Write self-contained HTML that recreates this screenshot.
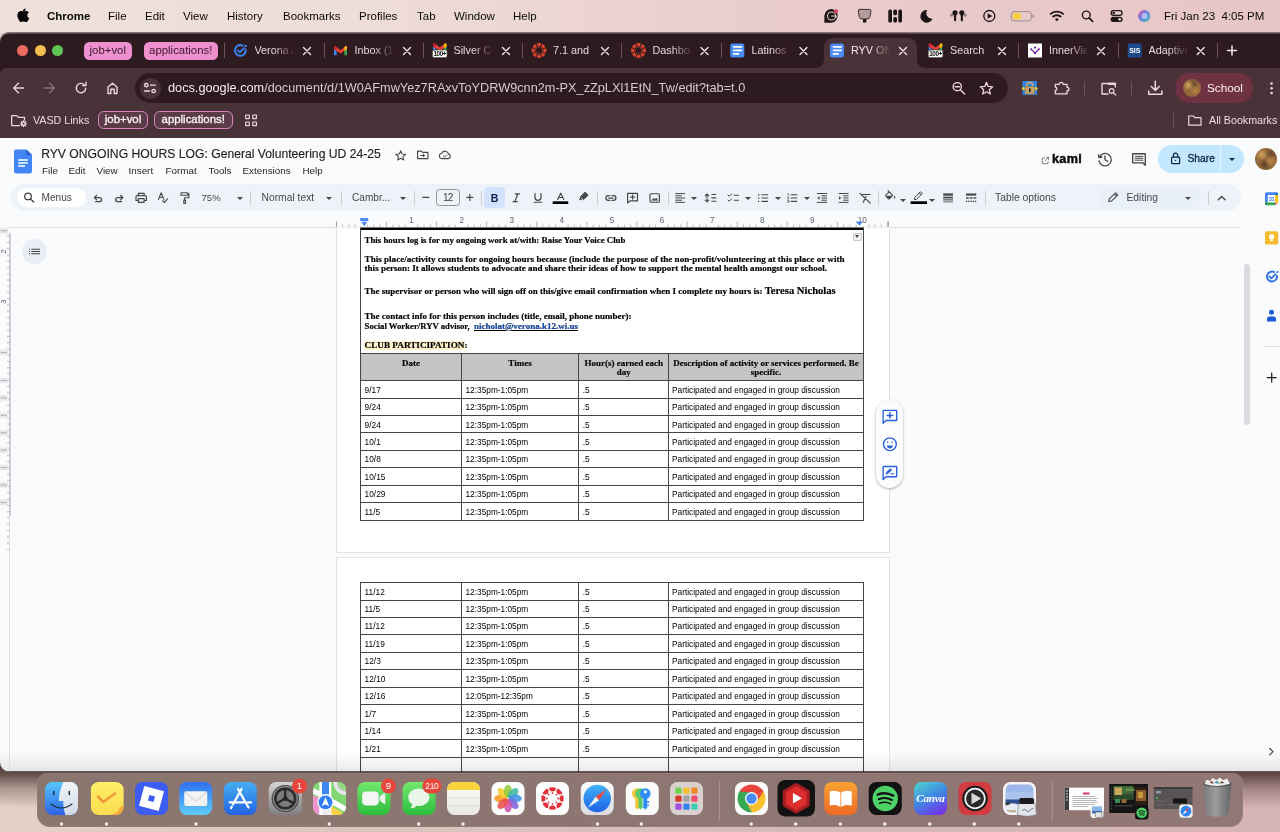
<!DOCTYPE html>
<html lang="en">
<head>
<meta charset="utf-8">
<title>RYV ONGOING HOURS LOG</title>
<style>
*{box-sizing:border-box;margin:0;padding:0}
html,body{width:1280px;height:832px;overflow:hidden}
body{position:relative;background:linear-gradient(90deg,#e4d1c9 0,#dbc6bf 25%,#d4bab7 65%,#d6b3b7 100%);font-family:"Liberation Sans",sans-serif;color:#000;-webkit-font-smoothing:antialiased}
.abs{position:absolute}
#menubar span,#tabstrip,#toolbar>div,#bmbar>div,#D{will-change:transform}
svg{position:absolute;overflow:visible}
/* ---------- mac menu bar ---------- */
#menubar{position:absolute;left:0;top:0;width:1280px;height:33px;background:linear-gradient(90deg,#efe1db 0,#eedcd7 30%,#e9cccb 62%,#e8c6c7 100%)}
#menubar span{position:absolute;top:8px;font-size:11.5px;line-height:16px;color:#0a0a0a;white-space:nowrap}
#menubar span.b{font-weight:bold}
/* ---------- chrome window ---------- */
#win{position:absolute;left:0;top:32px;width:1280px;height:740px;background:#2e1b20;border-radius:9px 0 0 10px;overflow:hidden;box-shadow:inset 0 1.4px .6px rgba(255,235,235,.42)}
#tabstrip{position:absolute;left:0;top:0;width:1280px;height:36px}
#toolbar{position:absolute;left:0;top:36px;width:1280px;height:38px;background:#4a3338;border-radius:6.5px 0 0 0}
#bmbar{position:absolute;left:0;top:74px;width:1280px;height:31.5px;background:#4a3338}
.tl{position:absolute;top:13.3px;width:11px;height:11px;border-radius:50%}
.pill{position:absolute;top:10px;height:17.5px;border-radius:5.5px;background:#ee8fce;color:#3a1a2c;font-size:11.4px;line-height:17.5px;text-align:center;white-space:nowrap}
.tab{position:absolute;top:9.8px;height:16px;font-size:10.8px;line-height:16px;color:#e8d6da;white-space:nowrap;overflow:hidden}
.tabx{position:absolute;top:9px;font-size:13px;line-height:18px;color:#f0e4e6}
.tsep{position:absolute;top:11px;width:1px;height:15px;background:#6a5258}
#omni{position:absolute;left:135px;top:5px;width:872.5px;height:29.5px;border-radius:15px;background:#2e1b20}
#url{position:absolute;left:167.5px;top:12px;font-size:12.73px;line-height:16px;color:#d9c9cd;white-space:nowrap}
#url b{font-weight:normal;color:#f6edee}
.bm{position:absolute;top:5.6px;font-size:10.7px;line-height:16px;color:#eadcdf;white-space:nowrap}
.bpill{position:absolute;top:5px;height:18.2px;border-radius:6px;border:1.4px solid #d884bd;background:#5a3c49;color:#fbeef5;font-size:11.4px;-webkit-text-stroke:.35px #fbeef5;line-height:15px;text-align:center;white-space:nowrap}
.fade{position:absolute;top:9px;width:22px;height:18px;background:linear-gradient(90deg,rgba(46,27,32,0),#2e1b20 95%)}
.fade.a{background:linear-gradient(90deg,rgba(74,51,56,0),#4a3338 95%)}
/* ---------- docs ---------- */
#docs{position:absolute;left:0;top:105.5px;width:1280px;height:636px;background:#f9fbfd;overflow:hidden}
#D{position:absolute;left:0;top:0;width:1280px;height:772px;overflow:hidden;border-radius:0 0 0 10px}
/* page */
#P{position:absolute;left:0;top:0;width:1280px;height:772px;clip-path:inset(227.5px 0 0 0)}
#title{position:absolute;left:41.2px;top:144.8px;-webkit-text-stroke:.15px #1f1f1f;font-size:12.17px;line-height:18px;color:#1f1f1f;white-space:nowrap}
.mn{position:absolute;top:163.5px;font-size:9.85px;line-height:14px;color:#1f1f1f;white-space:nowrap}
#tb{position:absolute;left:10.5px;top:183.8px;width:1230.5px;height:27.4px;border-radius:13.7px;background:#eef3fa}
.tt{position:absolute;top:190.5px;font-size:10.1px;line-height:14px;color:#444746;white-space:nowrap}
.vs{position:absolute;top:190.5px;width:1px;height:14px;background:#c8cbd0}
.car{position:absolute;top:196.5px;width:0;height:0;border-left:3.1px solid transparent;border-right:3.1px solid transparent;border-top:3.5px solid #444746}
.page{position:absolute;left:336px;width:553.5px;background:#fff;border:1px solid #e2e4e8}
.ser{font-family:"Liberation Serif",serif;font-weight:bold;-webkit-text-stroke:.18px #000;color:#000;white-space:nowrap;position:absolute;font-size:9px;line-height:10px;left:364.6px}
.hl{position:absolute;background:#454545}
.vl{position:absolute;background:#454545;width:1px}
.c{position:absolute;font-size:8.3px;line-height:10px;color:#000;white-space:nowrap}
.th{position:absolute;font-family:"Liberation Serif",serif;font-weight:bold;-webkit-text-stroke:.15px #000;font-size:9px;line-height:9.4px;color:#000;text-align:center;white-space:nowrap}

table.t{position:absolute;border-collapse:collapse;table-layout:fixed;font-size:8.25px;color:#000}
table.t td{border:1px solid #222;padding:0 0 0 4px;height:17.4px;vertical-align:middle;white-space:nowrap;line-height:10px}
table.t td.h{background:#cccccc;font-family:"Liberation Serif",serif;font-weight:bold;font-size:8.4px;text-align:center;vertical-align:top;padding:3px 2px 0 2px;white-space:normal;line-height:9.6px}
/* dock */
#dock{position:absolute;left:37px;top:773.3px;width:1206.300px;height:54px;border-radius:10px 10px 13px 13px;background:linear-gradient(90deg,#8b766f,#8e7672 60%,#917775);box-shadow:0 0 0 .6px rgba(255,255,255,.12) inset}
.di{position:absolute;top:781px;width:38px;height:38px;border-radius:9px}
.dot{position:absolute;top:825px;width:3px;height:3px;border-radius:50%;background:#f3eceb}
</style>
</head>
<body>
<!-- MENUBAR -->
<div id="menubar">
<span class="b" style="left:47px">Chrome</span>
<span style="left:108px">File</span>
<span style="left:145px">Edit</span>
<span style="left:183px">View</span>
<span style="left:227px">History</span>
<span style="left:283px">Bookmarks</span>
<span style="left:359px">Profiles</span>
<span style="left:417px">Tab</span>
<span style="left:454px">Window</span>
<span style="left:513px">Help</span>
<span style="left:1164px">Fri Jan 23&nbsp; 4:05 PM</span>
</div>
<div id="wshadow" class="abs" style="left:0;top:764px;width:1280px;height:44px;background:linear-gradient(180deg,rgba(62,40,38,.85) 0,rgba(62,40,38,.78) 22%,rgba(80,55,52,.38) 55%,rgba(90,60,58,0) 100%)"></div>
<!-- WINDOW -->
<div id="win">

<div id="tabstrip">
<div class="tl" style="left:17.1px;background:#ee6a5f"></div>
<div class="tl" style="left:34.5px;background:#f5bf4f"></div>
<div class="tl" style="left:51.9px;background:#5fc454"></div>
<div class="pill" style="left:84px;width:47.5px">job+vol</div>
<div class="pill" style="left:144px;width:73.5px">applications!</div>
<!-- tab separators -->
<div class="tsep" style="left:223.5px"></div>
<div class="tsep" style="left:323.5px"></div>
<div class="tsep" style="left:422.5px"></div>
<div class="tsep" style="left:522px"></div>
<div class="tsep" style="left:621px"></div>
<div class="tsep" style="left:720.5px"></div>
<div class="tsep" style="left:1018px"></div>
<div class="tsep" style="left:1117.5px"></div>
<div class="tsep" style="left:1216.5px"></div>
<!-- active tab -->
<div class="abs" style="left:823.5px;top:6px;width:93.5px;height:30px;background:#4a3338;border-radius:9px 9px 0 0"></div>
<svg style="left:815.5px;top:28px" width="8" height="8"><path d="M8 0 V8 H0 A8 8 0 0 0 8 0Z" fill="#4a3338"/></svg>
<svg style="left:917px;top:28px" width="8" height="8"><path d="M0 0 V8 H8 A8 8 0 0 1 0 0Z" fill="#4a3338"/></svg>
<!-- tab labels -->
<div class="tab" style="left:254.5px;width:38px">Verona Area</div>
<div class="tab" style="left:354.5px;width:38px">Inbox (1,204)</div>
<div class="tab" style="left:453.5px;width:38px">Silver Cord</div>
<div class="tab" style="left:553px;width:38px">7.1 and</div>
<div class="tab" style="left:652.5px;width:38px">Dashboard</div>
<div class="tab" style="left:751.5px;width:38px">Latinos</div>
<div class="tab" style="left:851px;width:38px;color:#f6ecee">RYV ONGOING</div>
<div class="tab" style="left:950px;width:38px">Search</div>
<div class="tab" style="left:1049px;width:38px">InnerView</div>
<div class="tab" style="left:1148.5px;width:38px">Adaptive</div>
<!-- fades -->
<div class="fade" style="left:274px"></div>
<div class="fade" style="left:374px"></div>
<div class="fade" style="left:473px"></div>
<div class="fade" style="left:672px"></div>
<div class="fade" style="left:771px"></div>
<div class="fade a" style="left:870px"></div>
<div class="fade" style="left:1069px"></div>
<div class="fade" style="left:1168px"></div>
</div>

<div id="toolbar">
<div id="omni"></div>
<div class="abs" style="left:139.5px;top:9.5px;width:21px;height:21px;border-radius:50%;background:#4a3338"></div>
<div id="url"><b>docs.google.com</b>/document/d/1W0AFmwYez7RAxvToYDRW9cnn2m-PX_zZpLXl1EtN_Tw/edit?tab=t.0</div>
<div class="abs" style="left:1175px;top:5px;width:78px;height:30px;border-radius:15px;background:#6e3242"></div>
<div class="abs" style="left:1183px;top:11px;width:18px;height:18px;border-radius:50%;background:radial-gradient(circle at 30% 35%,#d2a45c 0,rgba(210,164,92,0) 30%),radial-gradient(circle at 70% 65%,#b88444 0,rgba(184,132,68,0) 32%),radial-gradient(circle at 60% 25%,#6b4a2c 0,rgba(107,74,44,0) 30%),#94693c"></div>
<div class="abs" style="left:1206.5px;top:12px;font-size:11.75px;line-height:16px;color:#fff1f3">School</div>
</div>
<div id="bmbar">
<div class="bm" style="left:32.5px">VASD Links</div>
<div class="bpill" style="left:97.5px;width:50px">job+vol</div>
<div class="bpill" style="left:154px;width:78.5px">applications!</div>
<div class="abs" style="left:1172.5px;top:7px;width:1px;height:15px;background:#6a5258"></div>
<div class="bm" style="left:1209px">All Bookmarks</div>
</div>
<div id="docs"></div>
</div>

<svg id="chromeicons" style="left:0;top:0" width="1280" height="140" fill="none" stroke="#ecd6db" stroke-width="1.4" stroke-linecap="round" stroke-linejoin="round">
<g stroke="#f3e6e9" stroke-width="1.35"><path d="M303.5 47.5 l7 7 m0 -7 l-7 7"/><path d="M403.5 47.5 l7 7 m0 -7 l-7 7"/><path d="M502.5 47.5 l7 7 m0 -7 l-7 7"/><path d="M601.5 47.5 l7 7 m0 -7 l-7 7"/><path d="M701.0 47.5 l7 7 m0 -7 l-7 7"/><path d="M800.0 47.5 l7 7 m0 -7 l-7 7"/><path d="M899.5 47.5 l7 7 m0 -7 l-7 7"/><path d="M998.5 47.5 l7 7 m0 -7 l-7 7"/><path d="M1097.5 47.5 l7 7 m0 -7 l-7 7"/><path d="M1197.2 47.5 l7 7 m0 -7 l-7 7"/></g>
<path d="M1227.5 50.5 h9 m-4.5 -4.5 v9" stroke="#f3e6e9" stroke-width="1.5"/>
<g stroke-linecap="round" stroke-linejoin="round"><g fill="none" stroke="#3f87f5" stroke-width="1.9"><path d="M245.6 49.3 A5.4 5.4 0 1 1 242.6 45.6"/><path d="M237.9 50.4 L239.9 52.4 L243.9 48.2" stroke-width="1.7"/><circle cx="245.6" cy="45.9" r=".7" fill="#3f87f5" stroke-width="1.1"/></g><g stroke="none"><path d="M334 47.2 V55.2 H336.6 V48.800000000000004Z" fill="#4285f4"/><path d="M347 47.2 V55.2 H344.4 V48.800000000000004Z" fill="#34a853"/><path d="M334 47.2 L335.3 45.9 L340.5 50.2 L345.7 45.9 L347 47.2 V49.0 L340.5 53.4 L334 49.0Z" fill="#ea4335"/><path d="M344.4 47.2 L345.7 45.9 Q347 45.4 347 47.2 V49.0 L344.4 50.9Z" fill="#fbbc04"/><path d="M336.6 47.2 L335.3 45.9 Q334 45.4 334 47.2 V49.0 L336.6 50.9Z" fill="#c5221f"/></g><g stroke="none"><g stroke="none"><path d="M433.0 44.6 V52 H435.6 V46.2Z" fill="#4285f4"/><path d="M446.5 44.6 V52 H443.9 V46.2Z" fill="#34a853"/><path d="M433.0 44.6 L434.3 43.3 L439.75 47.6 L445.2 43.3 L446.5 44.6 V46.4 L439.75 50.8 L433.0 46.4Z" fill="#ea4335"/><path d="M443.9 44.6 L445.2 43.3 Q446.5 42.8 446.5 44.6 V46.4 L443.9 48.3Z" fill="#fbbc04"/><path d="M435.6 44.6 L434.3 43.3 Q433.0 42.8 433.0 44.6 V46.4 L435.6 48.3Z" fill="#c5221f"/></g><rect x="432.5" y="50" width="14.5" height="7.5" rx="1.6" fill="#fff" stroke="#555" stroke-width=".7"/><text x="439.75" y="56.2" font-size="6.3" font-weight="bold" text-anchor="middle" fill="#111" font-family="Liberation Sans,sans-serif" letter-spacing="-.4">100+</text></g><g stroke="none"><circle cx="539" cy="50.5" r="7.4" fill="#e0452c"/><path d="M541.40 51.49 L546.02 53.41" stroke="#2e1b20" stroke-width="1.1"/><path d="M539.99 52.90 L541.91 57.52" stroke="#2e1b20" stroke-width="1.1"/><path d="M538.01 52.90 L536.09 57.52" stroke="#2e1b20" stroke-width="1.1"/><path d="M536.60 51.49 L531.98 53.41" stroke="#2e1b20" stroke-width="1.1"/><path d="M536.60 49.51 L531.98 47.59" stroke="#2e1b20" stroke-width="1.1"/><path d="M538.01 48.10 L536.09 43.48" stroke="#2e1b20" stroke-width="1.1"/><path d="M539.99 48.10 L541.91 43.48" stroke="#2e1b20" stroke-width="1.1"/><path d="M541.40 49.51 L546.02 47.59" stroke="#2e1b20" stroke-width="1.1"/><circle cx="539" cy="50.5" r="2.9" fill="#2e1b20"/><circle cx="543.10" cy="50.50" r=".55" fill="#2e1b20"/><circle cx="541.90" cy="53.40" r=".55" fill="#2e1b20"/><circle cx="539.00" cy="54.60" r=".55" fill="#2e1b20"/><circle cx="536.10" cy="53.40" r=".55" fill="#2e1b20"/><circle cx="534.90" cy="50.50" r=".55" fill="#2e1b20"/><circle cx="536.10" cy="47.60" r=".55" fill="#2e1b20"/><circle cx="539.00" cy="46.40" r=".55" fill="#2e1b20"/><circle cx="541.90" cy="47.60" r=".55" fill="#2e1b20"/></g><g stroke="none"><circle cx="638.5" cy="50.5" r="7.4" fill="#e0452c"/><path d="M640.90 51.49 L645.52 53.41" stroke="#2e1b20" stroke-width="1.1"/><path d="M639.49 52.90 L641.41 57.52" stroke="#2e1b20" stroke-width="1.1"/><path d="M637.51 52.90 L635.59 57.52" stroke="#2e1b20" stroke-width="1.1"/><path d="M636.10 51.49 L631.48 53.41" stroke="#2e1b20" stroke-width="1.1"/><path d="M636.10 49.51 L631.48 47.59" stroke="#2e1b20" stroke-width="1.1"/><path d="M637.51 48.10 L635.59 43.48" stroke="#2e1b20" stroke-width="1.1"/><path d="M639.49 48.10 L641.41 43.48" stroke="#2e1b20" stroke-width="1.1"/><path d="M640.90 49.51 L645.52 47.59" stroke="#2e1b20" stroke-width="1.1"/><circle cx="638.5" cy="50.5" r="2.9" fill="#2e1b20"/><circle cx="642.60" cy="50.50" r=".55" fill="#2e1b20"/><circle cx="641.40" cy="53.40" r=".55" fill="#2e1b20"/><circle cx="638.50" cy="54.60" r=".55" fill="#2e1b20"/><circle cx="635.60" cy="53.40" r=".55" fill="#2e1b20"/><circle cx="634.40" cy="50.50" r=".55" fill="#2e1b20"/><circle cx="635.60" cy="47.60" r=".55" fill="#2e1b20"/><circle cx="638.50" cy="46.40" r=".55" fill="#2e1b20"/><circle cx="641.40" cy="47.60" r=".55" fill="#2e1b20"/></g><g stroke="none"><rect x="730.3" y="43.5" width="14" height="14" rx="2.2" fill="#4b8bf5"/><path d="M733.0999999999999 46.1 h9 v1.7 h-9z M733.0999999999999 49.6 h9 v1.7 h-9z M733.0999999999999 53.1 h6 v1.7 h-6z" fill="#fff"/></g><g stroke="none"><rect x="830" y="43.5" width="14" height="14" rx="2.2" fill="#4b8bf5"/><path d="M832.8 46.1 h9 v1.7 h-9z M832.8 49.6 h9 v1.7 h-9z M832.8 53.1 h6 v1.7 h-6z" fill="#fff"/></g><g stroke="none"><g stroke="none"><path d="M928.8 44.6 V52 H931.4 V46.2Z" fill="#4285f4"/><path d="M942.3 44.6 V52 H939.6999999999999 V46.2Z" fill="#34a853"/><path d="M928.8 44.6 L930.0999999999999 43.3 L935.55 47.6 L941.0 43.3 L942.3 44.6 V46.4 L935.55 50.8 L928.8 46.4Z" fill="#ea4335"/><path d="M939.6999999999999 44.6 L941.0 43.3 Q942.3 42.8 942.3 44.6 V46.4 L939.6999999999999 48.3Z" fill="#fbbc04"/><path d="M931.4 44.6 L930.0999999999999 43.3 Q928.8 42.8 928.8 44.6 V46.4 L931.4 48.3Z" fill="#c5221f"/></g><rect x="928.3" y="50" width="14.5" height="7.5" rx="1.6" fill="#fff" stroke="#555" stroke-width=".7"/><text x="935.55" y="56.2" font-size="6.3" font-weight="bold" text-anchor="middle" fill="#111" font-family="Liberation Sans,sans-serif" letter-spacing="-.4">100+</text></g><g stroke="none"><rect x="1028" y="43.5" width="14" height="14" fill="#fff"/><g fill="#6a1b9a"><circle cx="1035" cy="47.6" r="1.15"/><circle cx="1031.2" cy="49.3" r="1.05"/><circle cx="1038.8" cy="49.3" r="1.05"/><circle cx="1035" cy="53" r="1.2"/></g><path d="M1031.2 49.3 L1035 53 L1038.8 49.3" stroke="#6a1b9a" stroke-width="1.1" fill="none"/></g><g stroke="none"><rect x="1127.7" y="43.5" width="14" height="14" rx="1.6" fill="#1d4a8c"/><text x="1134.7" y="53.2" font-size="6.9" font-weight="bold" text-anchor="middle" fill="#fff" font-family="Liberation Sans,sans-serif">SIS</text></g></g><g stroke="none" fill="#1c1416"><path fill="#050303" d="M27.6 18.4c0-1.9 1.5-2.7 1.6-2.8-.9-1.3-2.2-1.4-2.7-1.5-1.1-.1-2.2.7-2.8.7-.6 0-1.5-.7-2.4-.6-1.2 0-2.4.7-3 1.8-1.3 2.3-.3 5.6.9 7.400.6.9 1.400 1.900 2.300 1.900.9 0 1.300-.6 2.400-.6 1.100 0 1.400.6 2.400.6 1 0 1.600-.9 2.200-1.800.7-1 1-2 1-2.100-.1 0-1.900-.7-1.900-2.900z" transform="translate(-.3 -3.2)"/><path fill="#050303" d="M25.300 9.900c.5-.6.800-1.400.7-2.300-.7 0-1.600.5-2.100 1.100-.5.500-.9 1.400-.8 2.200.8.100 1.700-.4 2.200-1z" transform="translate(-.3 .9)"/><path d="M831.500 8.900 A7 7 0 0 1 831.500 22.800 H824.400 V15.800 A7 7 0 0 1 831.500 8.900Z"/><circle cx="831.600" cy="16" r="4.100" fill="none" stroke="#ecd0cf" stroke-width="1.050"/><path d="M831.600 16 H836.200 V17.300" fill="none" stroke="#ecd0cf" stroke-width="1.050"/><path d="M833 12 L837.500 14.500 L836.500 10.500Z" fill="#1c1416"/><circle cx="836" cy="11.300" r="2.150" fill="#d9455f"/><path d="M859.600 9.400 H869.600 Q871.100 9.400 870.900 11 L870 16.600 Q869.600 19 867 19 H862.200 Q859.600 19 859.200 16.600 L858.300 11 Q858.100 9.400 859.600 9.400Z" fill="#b59d9d" stroke="#2a2022" stroke-width=".9"/><rect x="863" y="19" width="3.300" height="3.500"/><rect x="888.300" y="9.600" width="3.700" height="13" rx="1.500"/><rect x="898.300" y="9.600" width="3.700" height="13" rx="1.500"/><rect x="893.300" y="9.600" width="3.700" height="5.600" rx="1.500"/><rect x="893.300" y="16.900" width="3.700" height="5.700" rx="1.500"/><path d="M927.300 10.100 a6.300 6.300 0 1 0 5.200 8.700 a5.600 5.600 0 0 1 -5.200 -8.700z"/><circle cx="955" cy="12.800" r="2.600"/><rect x="954" y="13.500" width="2.100" height="7.800" rx=".8"/><circle cx="961.800" cy="12.800" r="2.600"/><rect x="960.800" y="13.500" width="2.100" height="7.800" rx=".8"/><circle cx="951.800" cy="15.100" r="1.600" fill="#8f7b7c"/><circle cx="965.100" cy="15.100" r="1.600" fill="#8f7b7c"/><circle cx="989.300" cy="16" r="5.500" fill="none" stroke="#1c1416" stroke-width="1.300"/><path d="M987.600 13.300 L992.300 16 L987.600 18.700Z"/><rect x="1011.300" y="11.600" width="20" height="9.300" rx="2.600" fill="none" stroke="#9d8a8a" stroke-width="1"/><rect x="1013" y="13.200" width="8" height="6.100" rx="1.300" fill="#f5cf3a"/><path d="M1032.600 14.600 v3.300 a1.600 1.600 0 0 0 0 -3.300z" fill="#9d8a8a"/><g fill="none" stroke="#1c1416" stroke-width="1.900" stroke-linecap="butt"><path d="M1050.100 14.400 a9.800 9.800 0 0 1 13.600 0"/><path d="M1052.700 17 a6 6 0 0 1 8.400 0"/></g><path d="M1054.900 19.200 a2.900 2.900 0 0 1 4 0 l-2 2.100z"/><circle cx="1086.300" cy="15" r="3.900" fill="none" stroke="#1c1416" stroke-width="1.400"/><path d="M1089.100 17.900 L1092.600 21.400" stroke="#1c1416" stroke-width="1.600" stroke-linecap="round"/><rect x="1111.100" y="10.700" width="11" height="4.600" rx="2.300" fill="none" stroke="#1c1416" stroke-width="1.200"/><circle cx="1113.700" cy="13" r="1.300"/><rect x="1110.600" y="16.700" width="12" height="5.200" rx="2.600"/><circle cx="1119.700" cy="19.300" r="1.400" fill="#e9c9c9"/></g><defs><radialGradient id="siri" cx="50%" cy="50%" r="60%"><stop offset="0" stop-color="#f3f0ff"/><stop offset=".35" stop-color="#6fb6e8"/><stop offset=".7" stop-color="#7a5fd0"/><stop offset="1" stop-color="#e0508a"/></radialGradient><linearGradient id="siri2" x1="0" y1="0" x2="1" y2="1"><stop offset="0" stop-color="#e45a9a"/><stop offset=".45" stop-color="#6a7fe0"/><stop offset="1" stop-color="#3fc6c0"/></linearGradient></defs><circle cx="1144.200" cy="16" r="6.100" fill="url(#siri2)" stroke="none"/><circle cx="1144.600" cy="16" r="3" fill="#e8eaff" opacity=".55" stroke="none"/>
<!-- nav -->
<path d="M23.7 88 H13.8 M18.4 83.3 L13.7 88 L18.4 92.7"/>
<path d="M44.3 88 H54.2 M49.6 83.3 L54.3 88 L49.6 92.7" stroke="#8b7177"/>
<path d="M85.7 88.3 A4.7 4.7 0 1 1 84.3 84.7 M86 82.2 V85.6 H82.6"/>
<path d="M108 93.5 V87 L112.5 83.2 L117 87 V93.5 H114.2 V89.3 H110.8 V93.5 Z"/>
<!-- site info -->
<g stroke="#f0dfe3" stroke-width="1.3"><circle cx="146.3" cy="85.2" r="1.7"/><path d="M150.5 85.2 H155.3"/><circle cx="153.6" cy="91" r="1.7"/><path d="M144.6 91 H149.4"/></g>
<!-- zoom -->
<circle cx="957.3" cy="86.7" r="4.1"/><path d="M960.4 89.8 L964.6 94"/><path d="M955.3 86.7 h4" stroke-width="1.6"/>
<!-- star -->
<path d="M986.5 82.3 L988.2 86.4 L992.7 86.8 L989.3 89.7 L990.3 94 L986.5 91.7 L982.7 94 L983.7 89.7 L980.3 86.8 L984.8 86.4 Z" stroke-width="1.3"/>
<!-- extension lock icon -->
<rect x="1022.5" y="81" width="14.5" height="14" fill="#2f86e0" stroke="none"/>
<circle cx="1023.5" cy="88.5" r="1.6" fill="#e8d23a" stroke="none"/><circle cx="1036" cy="88.5" r="1.6" fill="#e8d23a" stroke="none"/>
<path d="M1026.8 87 V85.3 A3 3 0 0 1 1032.8 85.3 V87" stroke="#b9a77a" stroke-width="1.8"/>
<rect x="1025" y="86.5" width="9.6" height="7.6" rx="1.5" fill="#c2a46a" stroke="#8a7040" stroke-width=".6"/>
<rect x="1029" y="88.3" width="1.6" height="3.8" rx=".6" fill="#1a1208" stroke="none"/>
<!-- puzzle -->
<path d="M1055.3 84.3 H1059.3 A1.9 1.9 0 0 1 1063.1 84.3 H1067 V87.2 A1.9 1.9 0 0 1 1067 91 V93.8 H1055.3 V90.7 A1.9 1.9 0 0 0 1055.3 87 Z" stroke-width="1.35"/>
<path d="M1084.5 82 V95 M1131.5 82 V95" stroke="#6a5258" stroke-width="1"/>
<!-- media -->
<path d="M1108 94 H1102 V83.5 H1115.3 V87" stroke-width="1.4"/><path d="M1108.5 83.8 H1115.2" stroke-width="2.2"/>
<circle cx="1111.6" cy="91" r="2.3" stroke-width="1.2"/><path d="M1113.4 92.8 L1115.7 95" stroke-width="1.2"/>
<!-- download -->
<path d="M1155.3 81.3 V90.2 M1151.3 86.5 L1155.3 90.4 L1159.3 86.5 M1148.7 91 V94.3 H1161.9 V91" stroke-width="1.5"/>
<!-- kebab -->
<g fill="#f0dfe3" stroke="none"><circle cx="1271.6" cy="83.5" r="1.25"/><circle cx="1271.6" cy="88.2" r="1.25"/><circle cx="1271.6" cy="92.9" r="1.25"/></g>
<!-- bookmarks bar icons -->
<path d="M24.5 120 V117.3 H18.3 L16.7 115.6 H11.7 V125.6 H19.5" stroke-width="1.3"/>
<circle cx="23.5" cy="123.7" r="1.7" stroke-width="1.6"/><path d="M23.5 120.6 v.6 m0 5 v.6 m-3.1 -3.1 h.6 m5 0 h.6 m-5.3 -2.2 l.4 .4 m3.6 3.6 l.4 .4 m0 -4.4 l-.4 .4 m-3.6 3.6 l-.4 .4" stroke-width="1.1"/>
<path d="M245.7 115 h3.6 v3.6 h-3.6z M252.8 115 h3.6 v3.6 h-3.6z M245.7 122 h3.6 v3.6 h-3.6z M252.8 122 h3.6 v3.6 h-3.6z" stroke-width="1.2"/>
<path d="M1188.7 116 H1193.3 L1194.9 117.7 H1201 V125.2 H1188.7 Z" stroke-width="1.2"/>
</svg>
<div id="D">
<div id="title">RYV ONGOING HOURS LOG: General Volunteering UD 24-25</div>
<div class="mn" style="left:42px">File</div>
<div class="mn" style="left:68.5px">Edit</div>
<div class="mn" style="left:96.5px">View</div>
<div class="mn" style="left:128.5px">Insert</div>
<div class="mn" style="left:165.5px">Format</div>
<div class="mn" style="left:208.5px">Tools</div>
<div class="mn" style="left:242.5px">Extensions</div>
<div class="mn" style="left:302.5px">Help</div>
<div class="abs" style="left:1052px;top:150px;font-size:12.6px;line-height:18px;font-weight:bold;color:#0b0b0b;letter-spacing:.35px;-webkit-text-stroke:.45px #0b0b0b">kami</div>
<div class="abs" style="left:1158px;top:145px;width:85.5px;height:28px;border-radius:14px;background:#c2e7ff"></div>
<div class="abs" style="left:1220px;top:145px;width:1px;height:28px;background:#e3f3ff"></div>
<div class="abs" style="left:1187.5px;top:152.2px;font-size:10.3px;line-height:14px;-webkit-text-stroke:.3px #0a2540;color:#0a2540">Share</div>
<div class="abs" style="left:1254.5px;top:148px;width:22px;height:22px;border-radius:50%;background:radial-gradient(circle at 30% 30%,#d2a45c 0,rgba(210,164,92,0) 28%),radial-gradient(circle at 70% 60%,#b88444 0,rgba(184,132,68,0) 30%),radial-gradient(circle at 45% 75%,#5a3a22 0,rgba(90,58,34,0) 30%),radial-gradient(circle at 75% 25%,#6b4a2c 0,rgba(107,74,44,0) 30%),#946a3c"></div>
<div id="tb"></div>
<div class="abs" style="left:17px;top:187.6px;width:69px;height:19.5px;border-radius:10px;background:#fff"></div>
<div class="tt" style="left:41.5px">Menus</div>
<div class="tt" style="left:201.5px;font-size:9.6px">75%</div>
<div class="tt" style="left:261.5px;font-size:10.3px">Normal text</div>
<div class="tt" style="left:352px">Cambr...</div>
<div class="abs" style="left:436px;top:189.2px;width:23.5px;height:16.5px;border:.8px solid #8e9398;border-radius:3.5px"></div>
<div class="tt" style="left:442.9px;font-size:10px;letter-spacing:-.7px;color:#3c4043">12</div>
<div class="abs" style="left:484px;top:187px;width:20.5px;height:20.5px;border-radius:3.5px;background:#d3e3fd"></div>
<div class="tt" style="left:490.8px;font-weight:bold;color:#0b1f4d;font-size:10.6px">B</div>
<div class="tt" style="left:995px;font-size:10.35px">Table options</div>
<div class="abs" style="left:1098px;top:186.5px;width:104px;height:21px;border-radius:10.5px;background:#eaf0fa"></div>
<div class="tt" style="left:1126.5px;font-size:10.3px">Editing</div>
<div class="vs" style="left:250.0px"></div>
<div class="vs" style="left:341.0px"></div>
<div class="vs" style="left:413.8px"></div>
<div class="vs" style="left:480.5px"></div>
<div class="vs" style="left:597.0px"></div>
<div class="vs" style="left:668.0px"></div>
<div class="vs" style="left:878.0px"></div>
<div class="vs" style="left:984.5px"></div>
<div class="vs" style="left:1208.0px"></div>
<div class="car" style="left:236.5px"></div>
<div class="car" style="left:326px"></div>
<div class="car" style="left:399.5px"></div>
<div class="car" style="left:691px"></div>
<div class="car" style="left:745px"></div>
<div class="car" style="left:775px"></div>
<div class="car" style="left:804px"></div>
<div class="car" style="left:1185px"></div>
<div class="car" style="left:900px;top:198.5px"></div>
<div class="car" style="left:929px;top:198.5px"></div>
<div class="car" style="left:1229px;top:158px;border-top-color:#0a2540"></div>
<div class="abs" style="left:9px;top:227px;width:1232px;height:1px;background:#dadce0"></div>
<div class="abs" style="left:21.5px;top:238.8px;width:25px;height:25px;border-radius:50%;background:#e9eef6"></div>
<div class="abs" style="left:1244px;top:264px;width:5.5px;height:161px;border-radius:3px;background:#dadce0"></div>
<div class="abs" style="left:1264px;top:346px;width:16px;height:1px;background:#dadce0"></div>
<svg id="ruler" style="left:0;top:0" width="1280" height="772" fill="none">
<path d="M336.35 221.5V227M342.61 224.6V227M348.88 224.6V227M355.14 224.6V227M367.66 224.6V227M373.92 224.6V227M380.19 224.6V227M386.45 221.5V227M392.71 224.6V227M398.97 224.6V227M405.24 224.6V227M417.76 224.6V227M424.02 224.6V227M430.29 224.6V227M436.55 221.5V227M442.81 224.6V227M449.07 224.6V227M455.34 224.6V227M467.86 224.6V227M474.12 224.6V227M480.39 224.6V227M486.65 221.5V227M492.91 224.6V227M499.17 224.6V227M505.44 224.6V227M517.96 224.6V227M524.23 224.6V227M530.49 224.6V227M536.75 221.5V227M543.01 224.6V227M549.27 224.6V227M555.54 224.6V227M568.06 224.6V227M574.33 224.6V227M580.59 224.6V227M586.85 221.5V227M593.11 224.6V227M599.38 224.6V227M605.64 224.6V227M618.16 224.6V227M624.42 224.6V227M630.69 224.6V227M636.95 221.5V227M643.21 224.6V227M649.47 224.6V227M655.74 224.6V227M668.26 224.6V227M674.52 224.6V227M680.79 224.6V227M687.05 221.5V227M693.31 224.6V227M699.58 224.6V227M705.84 224.6V227M718.36 224.6V227M724.62 224.6V227M730.89 224.6V227M737.15 221.5V227M743.41 224.6V227M749.67 224.6V227M755.94 224.6V227M768.46 224.6V227M774.72 224.6V227M780.99 224.6V227M787.25 221.5V227M793.51 224.6V227M799.77 224.6V227M806.04 224.6V227M818.56 224.6V227M824.83 224.6V227M831.09 224.6V227M837.35 221.5V227M843.61 224.6V227M849.88 224.6V227M856.14 224.6V227M868.66 224.6V227M874.92 224.6V227M881.19 224.6V227M887.45 221.5V227" stroke="#aeb2b7" stroke-width=".9"/>
<path d="M336.5 221.300V227M888.500 221.300V227" stroke="#9aa0a6" stroke-width=".9"/>
<text x="411.6" y="222.600" font-size="8.200" text-anchor="middle" fill="#5f6368" font-family="Liberation Sans,sans-serif">1</text>
<text x="461.7" y="222.600" font-size="8.200" text-anchor="middle" fill="#5f6368" font-family="Liberation Sans,sans-serif">2</text>
<text x="511.8" y="222.600" font-size="8.200" text-anchor="middle" fill="#5f6368" font-family="Liberation Sans,sans-serif">3</text>
<text x="561.9" y="222.600" font-size="8.200" text-anchor="middle" fill="#5f6368" font-family="Liberation Sans,sans-serif">4</text>
<text x="612.0" y="222.600" font-size="8.200" text-anchor="middle" fill="#5f6368" font-family="Liberation Sans,sans-serif">5</text>
<text x="662.1" y="222.600" font-size="8.200" text-anchor="middle" fill="#5f6368" font-family="Liberation Sans,sans-serif">6</text>
<text x="712.2" y="222.600" font-size="8.200" text-anchor="middle" fill="#5f6368" font-family="Liberation Sans,sans-serif">7</text>
<text x="762.3" y="222.600" font-size="8.200" text-anchor="middle" fill="#5f6368" font-family="Liberation Sans,sans-serif">8</text>
<text x="812.4" y="222.600" font-size="8.200" text-anchor="middle" fill="#5f6368" font-family="Liberation Sans,sans-serif">9</text>
<text x="862.3" y="222.600" font-size="8.200" text-anchor="middle" fill="#5f6368" font-family="Liberation Sans,sans-serif">10</text>
<rect x="360.200" y="218.100" width="8.100" height="2.900" fill="#4a86f0"/><path d="M361.200 221.700 H367.300 L364.250 226.200Z" fill="#4a86f0"/>
<path d="M855.600 221.500 H863.100 L859.400 225.700Z" fill="#4a86f0"/>
<rect x="9.300" y="233" width="1.400" height="283" fill="#b8bbbf"/>
<path d="M7 236.20H9.600M7 242.46H9.600M7 248.72H9.600M7 254.99H9.600M7 261.25H9.600M7 267.51H9.600M7 273.77H9.600M7 280.04H9.600M7 286.30H9.600M7 292.56H9.600M7 298.82H9.600M7 305.09H9.600M7 311.35H9.600M7 317.61H9.600M7 323.87H9.600M7 330.14H9.600M7 336.40H9.600M7 342.66H9.600M7 348.92H9.600M7 355.19H9.600M7 361.45H9.600M7 367.71H9.600M7 373.97H9.600M7 380.24H9.600M7 386.50H9.600M7 392.76H9.600M7 399.02H9.600M7 405.29H9.600M7 411.55H9.600M7 417.81H9.600M7 424.07H9.600M7 430.34H9.600M7 436.60H9.600M7 442.86H9.600M7 449.12H9.600M7 455.39H9.600M7 461.65H9.600M7 467.91H9.600M7 474.17H9.600M7 480.44H9.600M7 486.70H9.600M7 492.96H9.600M7 499.22H9.600M7 505.49H9.600M7 511.75H9.600M7 518.01H9.600M7 524.27H9.600M7 530.54H9.600M7 536.80H9.600M7 543.06H9.600M7 549.32H9.600" stroke="#a8acb0" stroke-width=".8"/>
<rect x="0" y="228.0" width="8.300" height="5.400" fill="#e6e7e9"/><path d="M1 230.7H7" stroke="#8a8d91" stroke-width=".9" stroke-dasharray="1.300 .700"/>
<rect x="0" y="349.8" width="8.300" height="5.400" fill="#e6e7e9"/><path d="M1 352.5H7" stroke="#8a8d91" stroke-width=".9" stroke-dasharray="1.300 .700"/>
<rect x="0" y="377.8" width="8.300" height="5.400" fill="#e6e7e9"/><path d="M1 380.5H7" stroke="#8a8d91" stroke-width=".9" stroke-dasharray="1.300 .700"/>
<rect x="0" y="395.3" width="8.300" height="5.400" fill="#e6e7e9"/><path d="M1 398.0H7" stroke="#8a8d91" stroke-width=".9" stroke-dasharray="1.300 .700"/>
<rect x="0" y="412.7" width="8.300" height="5.400" fill="#e6e7e9"/><path d="M1 415.4H7" stroke="#8a8d91" stroke-width=".9" stroke-dasharray="1.300 .700"/>
<rect x="0" y="430.1" width="8.300" height="5.400" fill="#e6e7e9"/><path d="M1 432.8H7" stroke="#8a8d91" stroke-width=".9" stroke-dasharray="1.300 .700"/>
<rect x="0" y="447.5" width="8.300" height="5.400" fill="#e6e7e9"/><path d="M1 450.2H7" stroke="#8a8d91" stroke-width=".9" stroke-dasharray="1.300 .700"/>
<rect x="0" y="464.9" width="8.300" height="5.400" fill="#e6e7e9"/><path d="M1 467.6H7" stroke="#8a8d91" stroke-width=".9" stroke-dasharray="1.300 .700"/>
<rect x="0" y="482.3" width="8.300" height="5.400" fill="#e6e7e9"/><path d="M1 485.0H7" stroke="#8a8d91" stroke-width=".9" stroke-dasharray="1.300 .700"/>
<rect x="0" y="499.8" width="8.300" height="5.400" fill="#e6e7e9"/><path d="M1 502.5H7" stroke="#8a8d91" stroke-width=".9" stroke-dasharray="1.300 .700"/>
<text transform="translate(5.700 251.500) rotate(-90)" font-size="7.500" text-anchor="middle" fill="#5f6368" font-family="Liberation Sans,sans-serif">2</text>
<text transform="translate(5.700 301.600) rotate(-90)" font-size="7.500" text-anchor="middle" fill="#5f6368" font-family="Liberation Sans,sans-serif">3</text>
</svg>
<div id="P">
<div class="page" style="top:200px;height:353px"></div>
<div class="page" style="top:557px;height:300px"></div>
<div class="ser" style="top:234.55px;font-size:8.82px">This hours log is for my ongoing work at/with: Raise Your Voice Club</div>
<div class="ser" style="top:253.85px;font-size:9.08px">This place/activity counts for ongoing hours because (include the purpose of the non-profit/volunteering at this place or with</div>
<div class="ser" style="top:263.45px;font-size:9.04px">this person: It allows students to advocate and share their ideas of how to support the mental health amongst our school.</div>
<div class="ser" style="top:286.45px;font-size:9px">The supervisor or person who will sign off on this/give email confirmation when I complete my hours is: <span style="font-size:10.6px">Teresa Nicholas</span></div>
<div class="ser" style="top:310.85px;font-size:9.01px">The contact info for this person includes (title, email, phone number):</div>
<div class="ser" style="top:320.95px;font-size:9px"><span style="font-size:8.7px">Social Worker/RYV advisor,&nbsp; </span><span style="color:#1155cc;text-decoration:underline">nicholat@verona.k12.wi.us</span></div>
<div class="abs" style="left:364px;top:340.6px;width:100.5px;height:9.2px;background:#fff2cc"></div>
<div class="ser" style="top:339.75px;font-size:9.18px">CLUB PARTICIPATION:</div>
<div class="abs" style="left:360px;top:227.3px;width:504px;height:2.9px;background:#000"></div>
<div class="abs" style="left:361px;top:353.5px;width:502.5px;height:27.5px;background:#c4c4c4"></div>
<div class="hl" style="left:360px;top:352.8px;width:504px;height:1px"></div>
<div class="hl" style="left:360px;top:380.1px;width:504px;height:1px"></div>
<div class="hl" style="left:360px;top:397.5px;width:504px;height:1px"></div>
<div class="hl" style="left:360px;top:415.0px;width:504px;height:1px"></div>
<div class="hl" style="left:360px;top:432.4px;width:504px;height:1px"></div>
<div class="hl" style="left:360px;top:449.8px;width:504px;height:1px"></div>
<div class="hl" style="left:360px;top:467.3px;width:504px;height:1px"></div>
<div class="hl" style="left:360px;top:484.7px;width:504px;height:1px"></div>
<div class="hl" style="left:360px;top:502.1px;width:504px;height:1px"></div>
<div class="hl" style="left:360px;top:519.5px;width:504px;height:1px"></div>
<div class="vl" style="left:360px;top:228px;height:292.5px"></div>
<div class="vl" style="left:863px;top:228px;height:292.5px"></div>
<div class="vl" style="left:461.0px;top:353px;height:167.5px"></div>
<div class="vl" style="left:578.0px;top:353px;height:167.5px"></div>
<div class="vl" style="left:668.0px;top:353px;height:167.5px"></div>
<div class="th" style="left:361px;width:100px;top:358.6px">Date</div>
<div class="th" style="left:462px;width:116px;top:358.6px">Times</div>
<div class="th" style="left:579px;width:89.5px;top:358.6px">Hour(s) earned each<br>day</div>
<div class="th" style="left:669px;width:194px;top:358.6px">Description of activity or services performed. Be<br>specific.</div>
<div class="c" style="left:364.6px;top:385px">9/17</div><div class="c" style="left:465.5px;top:385px">12:35pm-1:05pm</div><div class="c" style="left:582.8px;top:385px">.5</div><div class="c" style="left:672px;top:385px">Participated and engaged in group discussion</div>
<div class="c" style="left:364.6px;top:402px">9/24</div><div class="c" style="left:465.5px;top:402px">12:35pm-1:05pm</div><div class="c" style="left:582.8px;top:402px">.5</div><div class="c" style="left:672px;top:402px">Participated and engaged in group discussion</div>
<div class="c" style="left:364.6px;top:420px">9/24</div><div class="c" style="left:465.5px;top:420px">12:35pm-1:05pm</div><div class="c" style="left:582.8px;top:420px">.5</div><div class="c" style="left:672px;top:420px">Participated and engaged in group discussion</div>
<div class="c" style="left:364.6px;top:437px">10/1</div><div class="c" style="left:465.5px;top:437px">12:35pm-1:05pm</div><div class="c" style="left:582.8px;top:437px">.5</div><div class="c" style="left:672px;top:437px">Participated and engaged in group discussion</div>
<div class="c" style="left:364.6px;top:454px">10/8</div><div class="c" style="left:465.5px;top:454px">12:35pm-1:05pm</div><div class="c" style="left:582.8px;top:454px">.5</div><div class="c" style="left:672px;top:454px">Participated and engaged in group discussion</div>
<div class="c" style="left:364.6px;top:472px">10/15</div><div class="c" style="left:465.5px;top:472px">12:35pm-1:05pm</div><div class="c" style="left:582.8px;top:472px">.5</div><div class="c" style="left:672px;top:472px">Participated and engaged in group discussion</div>
<div class="c" style="left:364.6px;top:489px">10/29</div><div class="c" style="left:465.5px;top:489px">12:35pm-1:05pm</div><div class="c" style="left:582.8px;top:489px">.5</div><div class="c" style="left:672px;top:489px">Participated and engaged in group discussion</div>
<div class="c" style="left:364.6px;top:507px">11/5</div><div class="c" style="left:465.5px;top:507px">12:35pm-1:05pm</div><div class="c" style="left:582.8px;top:507px">.5</div><div class="c" style="left:672px;top:507px">Participated and engaged in group discussion</div>
<div class="hl" style="left:360px;top:582.0px;width:504px;height:1px"></div>
<div class="hl" style="left:360px;top:599.5px;width:504px;height:1px"></div>
<div class="hl" style="left:360px;top:616.9px;width:504px;height:1px"></div>
<div class="hl" style="left:360px;top:634.4px;width:504px;height:1px"></div>
<div class="hl" style="left:360px;top:651.8px;width:504px;height:1px"></div>
<div class="hl" style="left:360px;top:669.2px;width:504px;height:1px"></div>
<div class="hl" style="left:360px;top:686.7px;width:504px;height:1px"></div>
<div class="hl" style="left:360px;top:704.1px;width:504px;height:1px"></div>
<div class="hl" style="left:360px;top:721.6px;width:504px;height:1px"></div>
<div class="hl" style="left:360px;top:739.0px;width:504px;height:1px"></div>
<div class="hl" style="left:360px;top:756.5px;width:504px;height:1px"></div>
<div class="vl" style="left:360.0px;top:582px;height:200px"></div>
<div class="vl" style="left:461.0px;top:582px;height:200px"></div>
<div class="vl" style="left:578.0px;top:582px;height:200px"></div>
<div class="vl" style="left:668.0px;top:582px;height:200px"></div>
<div class="vl" style="left:863.0px;top:582px;height:200px"></div>
<div class="c" style="left:364.6px;top:587px">11/12</div><div class="c" style="left:465.5px;top:587px">12:35pm-1:05pm</div><div class="c" style="left:582.8px;top:587px">.5</div><div class="c" style="left:672px;top:587px">Participated and engaged in group discussion</div>
<div class="c" style="left:364.6px;top:604px">11/5</div><div class="c" style="left:465.5px;top:604px">12:35pm-1:05pm</div><div class="c" style="left:582.8px;top:604px">.5</div><div class="c" style="left:672px;top:604px">Participated and engaged in group discussion</div>
<div class="c" style="left:364.6px;top:621px">11/12</div><div class="c" style="left:465.5px;top:621px">12:35pm-1:05pm</div><div class="c" style="left:582.8px;top:621px">.5</div><div class="c" style="left:672px;top:621px">Participated and engaged in group discussion</div>
<div class="c" style="left:364.6px;top:639px">11/19</div><div class="c" style="left:465.5px;top:639px">12:35pm-1:05pm</div><div class="c" style="left:582.8px;top:639px">.5</div><div class="c" style="left:672px;top:639px">Participated and engaged in group discussion</div>
<div class="c" style="left:364.6px;top:656px">12/3</div><div class="c" style="left:465.5px;top:656px">12:35pm-1:05pm</div><div class="c" style="left:582.8px;top:656px">.5</div><div class="c" style="left:672px;top:656px">Participated and engaged in group discussion</div>
<div class="c" style="left:364.6px;top:674px">12/10</div><div class="c" style="left:465.5px;top:674px">12:35pm-1:05pm</div><div class="c" style="left:582.8px;top:674px">.5</div><div class="c" style="left:672px;top:674px">Participated and engaged in group discussion</div>
<div class="c" style="left:364.6px;top:691px">12/16</div><div class="c" style="left:465.5px;top:691px">12:05pm-12:35pm</div><div class="c" style="left:582.8px;top:691px">.5</div><div class="c" style="left:672px;top:691px">Participated and engaged in group discussion</div>
<div class="c" style="left:364.6px;top:709px">1/7</div><div class="c" style="left:465.5px;top:709px">12:35pm-1:05pm</div><div class="c" style="left:582.8px;top:709px">.5</div><div class="c" style="left:672px;top:709px">Participated and engaged in group discussion</div>
<div class="c" style="left:364.6px;top:726px">1/14</div><div class="c" style="left:465.5px;top:726px">12:35pm-1:05pm</div><div class="c" style="left:582.8px;top:726px">.5</div><div class="c" style="left:672px;top:726px">Participated and engaged in group discussion</div>
<div class="c" style="left:364.6px;top:744px">1/21</div><div class="c" style="left:465.5px;top:744px">12:35pm-1:05pm</div><div class="c" style="left:582.8px;top:744px">.5</div><div class="c" style="left:672px;top:744px">Participated and engaged in group discussion</div>
<div class="abs" style="left:853.400px;top:232.500px;width:8.600px;height:8px;background:#f1f1f1;border:.8px solid #c9c9c9;border-radius:1px"></div><div class="abs" style="left:855px;top:235.400px;width:0;height:0;border-left:2.700px solid transparent;border-right:2.700px solid transparent;border-top:3px solid #444"></div>
</div>
<div class="abs" style="left:875.700px;top:400.300px;width:27.800px;height:87.700px;border-radius:14px;background:#fbfcfe;box-shadow:0 1px 3px rgba(60,64,67,.3),0 1px 2px rgba(60,64,67,.15)"></div>
<svg id="docicons" style="left:0;top:0" width="1280" height="772" fill="none" stroke="#444746" stroke-width="1.25" stroke-linecap="round" stroke-linejoin="round">
<g stroke="none"><path d="M16.2 149.500 H26.400 L32 155.100 V171.300 A2.200 2.200 0 0 1 29.800 173.500 H16.200 A2.200 2.200 0 0 1 14 171.300 V151.700 A2.200 2.200 0 0 1 16.200 149.500Z" fill="#4285f4"/><path d="M26.400 149.500 V153.600 A1.500 1.500 0 0 0 27.900 155.100 H32Z" fill="#2b62cf"/><path d="M18.200 159.200 h9.600 v1.500 h-9.600z M18.200 162.200 h9.600 v1.500 h-9.600z M18.200 165.200 h6.800 v1.500 h-6.800z" fill="#fff"/></g>
<path d="M400.700 150.800 L402.100 154 L405.600 154.300 L402.900 156.600 L403.700 160 L400.700 158.200 L397.700 160 L398.500 156.600 L395.800 154.300 L399.300 154Z" stroke-width="1.050"/>
<path d="M417.600 151.100 H421.300 L422.600 152.400 H427.900 V158.600 H417.600Z" stroke-width="1.100"/><path d="M420.600 155.500 H424.600 M423.200 154.100 L424.700 155.500 L423.200 156.900" stroke-width="1"/>
<path d="M442.200 158.600 A2.700 2.700 0 0 1 441.900 153.200 A3.500 3.500 0 0 1 448.500 153.900 A2.400 2.400 0 0 1 448.200 158.600Z" stroke-width="1.100"/><path d="M443.300 155.900 L444.600 157.100 L446.900 154.700" stroke-width="1"/>
<path d="M1044.500 158 H1042.300 V163.700 H1048 V161.400 M1045.300 160.700 L1048.600 157.400 M1046.300 157.300 H1048.700 V159.700" stroke="#777" stroke-width=".9"/>
<path d="M1099.300 157.400 A6.200 6.200 0 1 1 1099 160.900 M1098.400 154.900 L1099.100 157.700 L1101.900 157" stroke-width="1.350"/><path d="M1105 156 V159.800 L1107.600 161.400" stroke-width="1.350"/>
<path d="M1132.700 153.700 H1145.300 V165.200 L1142.800 162.800 H1132.700Z" stroke-width="1.350"/><path d="M1135.100 156.400 H1142.900 M1135.100 158.300 H1142.900 M1135.100 160.200 H1142.900" stroke-width="1"/>
<g stroke="#0a2540"><rect x="1171.600" y="157.100" width="8" height="6.600" rx=".9" stroke-width="1.200"/><path d="M1173.400 157 V155.400 A2.200 2.200 0 0 1 1177.800 155.400 V157" stroke-width="1.200"/><circle cx="1175.600" cy="160.400" r=".7" fill="#0a2540" stroke="none"/></g>
<circle cx="28" cy="196.400" r="3.300" stroke-width="1.300"/><path d="M30.500 198.900 L33.700 202.100" stroke-width="1.400"/>
<path d="M96.700 195.300 L94.300 197.600 L96.700 199.900 M94.500 197.600 H99.300 A2.200 2.050 0 0 1 99.300 201.700 H95.600" stroke-width="1.200"/>
<path d="M120.500 195.300 L122.900 197.600 L120.500 199.900 M122.700 197.600 H117.900 A2.200 2.050 0 0 0 117.900 201.700 H121.600" stroke-width="1.200"/>
<path d="M138.300 195.600 V193.300 H144.100 V195.600 M138.200 200.500 H136 V196.900 A1.200 1.200 0 0 1 137.200 195.700 H145.200 A1.200 1.200 0 0 1 146.400 196.900 V200.500 H144.200 M138.300 198.700 H144.100 V202.300 H138.300Z" stroke-width="1.200"/>
<path d="M158.500 199.400 L161.200 192.800 L163.900 199.400 M159.500 197.300 H162.900" stroke-width="1.100"/><path d="M162.700 200.700 L164.300 202.300 L167.700 198.800" stroke-width="1.100"/>
<path d="M181 192.700 H187.800 V195.200 H181Z M187.800 193.900 H188.900 V197.700 H184.600 V200 M183.800 200.100 H185.500 V203.400 H183.800Z" stroke-width="1.100"/>
<path d="M422.400 197.400 H429.300 M466.300 197.400 H473.300 M469.800 193.900 V200.900" stroke-width="1.150" stroke-linecap="butt"/>
<path d="M515.400 193.900 H519.500 M513.100 201.700 H517.200 M517.600 194 L515 201.600" stroke-width="1.250"/>
<path d="M535 193.700 V197.300 A3 3 0 0 0 541 197.300 V193.700" stroke-width="1.250"/><path d="M534.200 202.200 H541.800" stroke-width="1.100"/>
<path d="M557.600 199.500 L560.700 193.200 L563.800 199.500 M558.700 197.500 H562.700" stroke-width="1.150"/><rect x="552.700" y="201.300" width="15.500" height="2.700" fill="#000" stroke="none"/>
<path d="M585.300 192.300 L588.200 195.100 L583.500 199.700 L580.700 196.900Z M580.700 197.100 L579.600 199.500 L581.500 199.700" fill="#444746" stroke-width=".9"/>
<path d="M609.800 195.600 H608.300 A2.400 2.400 0 0 0 608.300 200.400 H609.800 M612 195.600 H613.500 A2.400 2.400 0 0 1 613.500 200.400 H612 M608.700 198 H613.100" stroke-width="1.250"/>
<path d="M627.600 193.300 H637.500 V200.900 H630 L627.600 203Z" stroke-width="1.150"/><path d="M630.400 197.100 H634.800 M632.600 194.900 V199.300" stroke-width="1.100"/>
<rect x="650" y="193.700" width="9.400" height="8.500" rx="1" stroke-width="1.150"/><path d="M652 200.300 L653.800 198.200 L655 199.500 L656.300 198 L657.600 200.300Z" fill="#444746" stroke-width=".5"/>
<path d="M675.300 193.600 H685.200 M675.300 195.800 H682 M675.300 198 H685.200 M675.300 200.200 H682 M675.300 202.300 H685.200" stroke-width="1" stroke-linecap="butt"/>
<path d="M707 194.200 V201.700 M705.200 195.800 L707 194 L708.800 195.800 M705.200 200.100 L707 201.900 L708.800 200.100" stroke-width="1.100"/><path d="M711.300 194.500 H716.300 M711.300 197.900 H716.300 M711.300 201.300 H716.300" stroke-width="1.100" stroke-linecap="butt"/>
<path d="M728 195 L729.300 196.300 L731.700 193.800 M728 200 L729.300 201.300 L731.700 198.800" stroke-width="1"/><path d="M733.800 195.300 H739 M733.800 200.300 H739" stroke-width="1.100" stroke-linecap="butt"/>
<path d="M761.500 194.700 H768.100 M761.500 198 H768.100 M761.500 201.300 H768.100" stroke-width="1.150" stroke-linecap="butt"/><path d="M758 194.100 h1.300 v1.300 h-1.300z M758 197.400 h1.300 v1.300 h-1.300z M758 200.700 h1.300 v1.300 h-1.300z" fill="#444746" stroke="none"/>
<path d="M790.600 194.700 H797.200 M790.600 198 H797.200 M790.600 201.300 H797.200" stroke-width="1.150" stroke-linecap="butt"/><path d="M787.600 193.500 h.7 v2.300 M787.500 197.100 h1.300 l-1.300 1.700 h1.300 M787.500 200.200 h1.300 v2.200 h-1.300 M788 201.300 h.8" stroke-width=".6"/>
<path d="M817 193.500 H827 M821.500 195.800 H827 M821.500 198 H827 M821.500 200.200 H827 M817 202.400 H827" stroke-width="1" stroke-linecap="butt"/><path d="M819.600 196.300 L817.300 198 L819.600 199.700Z" fill="#444746" stroke="none"/>
<path d="M838.700 193.500 H848.600 M843.200 195.800 H848.600 M843.200 198 H848.600 M843.200 200.200 H848.600 M838.700 202.400 H848.600" stroke-width="1" stroke-linecap="butt"/><path d="M839 196.300 L841.300 198 L839 199.700Z" fill="#444746" stroke="none"/>
<path d="M860 193.400 L870.200 203.100 M862.500 194.500 H870 M866 196.500 L863.300 202.300" stroke-width="1.200"/>
<path d="M888 190.700 L892.700 195.400 L889.600 198.500 A1 1 0 0 1 888.200 198.500 L886 196.300 A1 1 0 0 1 886 194.900 L889.300 191.800" stroke-width="1.100"/><path d="M886.300 195.700 H892.400 L889 198.800Z" fill="#444746" stroke="none"/><path d="M894.500 196.600 q1 1.400 0 2 q-1 -.6 0 -2z" fill="#444746" stroke-width=".6"/>
<path d="M914.500 199.400 L915 197.200 L920.500 191.700 L922.300 193.500 L916.800 199 Z M919.300 192.900 L921.100 194.700" stroke-width="1"/><rect x="910.600" y="201.300" width="16.400" height="2.700" fill="#000" stroke="none"/>
<g stroke="none" fill="#444746"><rect x="943.200" y="193.400" width="9.800" height="2.300"/><rect x="943.200" y="196.700" width="9.800" height="1.700"/><rect x="943.200" y="199.300" width="9.800" height="1.100"/><rect x="943.200" y="201.500" width="9.800" height=".8"/></g>
<g stroke="none" fill="#444746"><rect x="966" y="193.500" width="10.300" height="2.100"/><rect x="966" y="197.300" width="2.800" height="1.400"/><rect x="969.700" y="197.300" width="2.800" height="1.400"/><rect x="973.500" y="197.300" width="2.800" height="1.400"/><rect x="966" y="200.700" width="1.400" height="1.300"/><rect x="968.200" y="200.700" width="1.400" height="1.300"/><rect x="970.400" y="200.700" width="1.400" height="1.300"/><rect x="972.600" y="200.700" width="1.400" height="1.300"/><rect x="974.800" y="200.700" width="1.400" height="1.300"/></g>
<path d="M1108.700 201.600 L1109.300 198.900 L1115.600 192.900 L1117.800 195 L1111.400 201.100 Z M1114.300 194.200 L1116.400 196.300" stroke-width="1.050"/>
<path d="M1218.300 199.700 L1221.700 196.400 L1225.100 199.700" stroke-width="1.400"/>
<path d="M31.300 249.300 H40 M31.300 251.550 H40 M31.300 253.800 H40" stroke-width="1.100" stroke-linecap="butt"/><path d="M29 248.800 h1 v1 h-1z M29 251.050 h1 v1 h-1z M29 253.300 h1 v1 h-1z" fill="#444746" stroke="none"/>
<g stroke="none"><rect x="1265" y="192.200" width="13" height="13" rx="1.600" fill="#fff"/><path d="M1265 195 V193.800 A1.600 1.600 0 0 1 1266.600 192.200 H1275.200 V195Z" fill="#4285f4"/><rect x="1265" y="195" width="2.800" height="7.400" fill="#4285f4"/><path d="M1265 202.400 h2.800 v2.800 h-1.200 a1.600 1.600 0 0 1 -1.600 -1.600z" fill="#188038"/><rect x="1267.800" y="202.400" width="7.400" height="2.800" fill="#34a853"/><path d="M1275.200 202.400 h2.800 l-2.800 2.800z" fill="#ea4335"/><rect x="1275.200" y="195" width="2.800" height="7.400" fill="#fbbc04"/><path d="M1275.200 192.200 h1.200 a1.600 1.600 0 0 1 1.600 1.600 v1.200 h-2.800z" fill="#1967d2"/><text x="1271.500" y="201" font-size="5.600" font-weight="bold" text-anchor="middle" fill="#4285f4" font-family="Liberation Sans,sans-serif" letter-spacing="-.3">31</text></g>
<g stroke="none"><rect x="1265" y="231.200" width="13.200" height="13.300" rx="1.600" fill="#f5ba2e"/><circle cx="1271.600" cy="236.700" r="2.600" fill="#fff"/><rect x="1270.300" y="239.400" width="2.600" height="1.700" fill="#fff"/></g>
<g stroke="#2f6fe4" stroke-width="1.900"><path d="M1276.900 275.600 A5 5 0 1 1 1274.100 272"/><path d="M1269.400 276.400 L1271.400 278.400 L1275.500 274.200" stroke-width="1.700"/><circle cx="1277.300" cy="272" r=".6" fill="#2f6fe4" stroke-width="1"/></g>
<g stroke="none" fill="#1a5bd8"><circle cx="1271.500" cy="312.200" r="2.500"/><path d="M1267 321.500 V319 A2.500 2.500 0 0 1 1269.500 316.500 H1273.500 A2.500 2.500 0 0 1 1276 319 V321.500Z"/></g>
<path d="M1267.200 377.600 H1276.200 M1271.700 373.100 V382.100" stroke="#1f1f1f" stroke-width="1.250"/>
<path d="M1269.800 748.500 L1273 751.700 L1269.800 754.900" stroke="#444746" stroke-width="1.200"/>
<g stroke="#2b5fd9" stroke-width="1.350" stroke-linejoin="round"><path d="M883.600 410.300 H896.200 Q896.700 410.300 896.700 410.800 V420 Q896.700 420.500 896.200 420.500 H886 L883.100 423.300 V410.800 Q883.100 410.300 883.600 410.300Z"/><path d="M887.200 415.400 H892.600 M889.900 412.700 V418.100" stroke-width="1.500"/><circle cx="889.900" cy="444.300" r="6.400"/><path d="M887 446 A3 3 0 0 0 892.800 446Z" fill="#2b5fd9" stroke-width=".5"/><circle cx="887.700" cy="442.300" r=".8" fill="#2b5fd9" stroke="none"/><circle cx="892.100" cy="442.300" r=".8" fill="#2b5fd9" stroke="none"/><path d="M883.600 466.500 H896.200 Q896.700 466.500 896.700 467 V476.200 Q896.700 476.700 896.200 476.700 H886 L883.100 479.500 V467 Q883.100 466.500 883.600 466.500Z"/><path d="M886 474 L886.500 472 L890.300 468.600 L891.800 470 L888 473.600Z" fill="#2b5fd9" stroke-width=".5"/><path d="M890.800 473.700 H893.800" stroke-width="1.100"/></g>
</svg>

<div class="abs" style="left:0;top:752px;width:1280px;height:20px;background:linear-gradient(180deg,rgba(0,0,0,0),rgba(0,0,0,.085))"></div>
<div class="abs" style="left:9.2px;top:516px;width:1px;height:257px;background:#dcdee2"></div>
<div class="abs" style="left:0;top:771px;width:1280px;height:1px;background:rgba(45,28,28,.7)"></div>
</div>
<!-- DOCK -->
<div id="dock"></div>
<!--DOCKSVG--><svg id="dockicons" style="left:0;top:0" width="1280" height="832"><defs><linearGradient id="gF1" x1="0" y1="0" x2="0" y2="1"><stop offset="0" stop-color="#55c6fa"/><stop offset="1" stop-color="#2f63e6"/></linearGradient><linearGradient id="gF2" x1="0" y1="0" x2="0" y2="1"><stop offset="0" stop-color="#f2f5f9"/><stop offset="1" stop-color="#cfd9e6"/></linearGradient><clipPath id="cF"><rect x="45" y="782" width="33" height="33" rx="7.5"/></clipPath><linearGradient id="gS" x1="0" y1="0" x2="0" y2="1"><stop offset="0" stop-color="#fff06a"/><stop offset="1" stop-color="#fbdc4e"/></linearGradient><clipPath id="cS"><rect x="90.75" y="782" width="33" height="33" rx="7.5"/></clipPath><linearGradient id="gM" x1="0" y1="0" x2="0" y2="1"><stop offset="0" stop-color="#2f6ff0"/><stop offset="1" stop-color="#5fcdf9"/></linearGradient><linearGradient id="gA" x1="0" y1="0" x2="0" y2="1"><stop offset="0" stop-color="#45aef3"/><stop offset="1" stop-color="#2264e2"/></linearGradient><linearGradient id="gG" x1="0" y1="0" x2="0" y2="1"><stop offset="0" stop-color="#d6d6d6"/><stop offset="1" stop-color="#7e7e80"/></linearGradient><clipPath id="cMp"><rect x="313" y="782" width="33" height="33" rx="7.5"/></clipPath><linearGradient id="gFt" x1="0" y1="0" x2="0" y2="1"><stop offset="0" stop-color="#74e86f"/><stop offset="1" stop-color="#2bbd3d"/></linearGradient><clipPath id="cN"><rect x="447" y="782" width="33" height="33" rx="7.5"/></clipPath><linearGradient id="gN" x1="0" y1="0" x2="0" y2="1"><stop offset="0" stop-color="#fdfdfb"/><stop offset="1" stop-color="#e9e7e2"/></linearGradient><linearGradient id="gSf" x1="0" y1="0" x2="0" y2="1"><stop offset="0" stop-color="#ffffff"/><stop offset="1" stop-color="#d8dade"/></linearGradient><linearGradient id="gSf2" x1="0" y1="0" x2="0" y2="1"><stop offset="0" stop-color="#3fb2f7"/><stop offset="1" stop-color="#1f62e6"/></linearGradient><linearGradient id="gB" x1="0" y1="0" x2="0" y2="1"><stop offset="0" stop-color="#fba232"/><stop offset="1" stop-color="#ee6a25"/></linearGradient><linearGradient id="gC" x1="0" y1="0" x2="1" y2="1"><stop offset="0" stop-color="#1fc6cf"/><stop offset="1" stop-color="#7a3de6"/></linearGradient><linearGradient id="gC2" x1=".25" y1="0" x2=".75" y2="1"><stop offset="0" stop-color="#4cc8d0"/><stop offset=".48" stop-color="#3f86e4"/><stop offset="1" stop-color="#7432e8"/></linearGradient><clipPath id="cPv"><rect x="1005.6" y="784.6" width="27.8" height="27.8" rx="5"/></clipPath><linearGradient id="gT" x1="0" y1="0" x2="1" y2="0"><stop offset="0" stop-color="#9a9c9e"/><stop offset="1" stop-color="#66686a"/></linearGradient><linearGradient id="gT2" x1="0" y1="0" x2="1" y2="0"><stop offset="0" stop-color="#77797b"/><stop offset=".45" stop-color="#9b9d9f"/><stop offset="1" stop-color="#606264"/></linearGradient></defs>
<g clip-path="url(#cF)"><rect x="45" y="782" width="33" height="33" fill="url(#gF1)"/><path d="M63.5 782 C60 789 59 795 58.8 801 H63.3 C63.2 806 64 811 65.5 815 H78 V782 Z" fill="url(#gF2)"/></g>
<path d="M51 804 Q61.5 812 72 804" fill="none" stroke="#1f2a3a" stroke-width="1.1" stroke-linecap="round"/><path d="M53.7 791.5 v3 M69.3 791.5 v3" stroke="#1f2a3a" stroke-width="1.5" stroke-linecap="round"/>
<path d="M63.5 782 C60 789 59 795 58.8 801 H63.3 C63.2 806 64 811 65.5 815" fill="none" stroke="#1f2a3a" stroke-width=".0"/>
<g clip-path="url(#cS)"><rect x="90.75" y="782" width="33" height="33" rx="7.5" fill="url(#gS)" /><path d="M123.75 805.5 Q118.75 807 118.05 811.5 Q114.75 814.5 107.75 815 H123.75Z" fill="#f5a73a"/></g><path d="M98.05 796.5 L103.25 802 L115.05 793.5" fill="none" stroke="#f29b3a" stroke-width="2.7" stroke-linecap="round" stroke-linejoin="round"/>
<rect x="135" y="782" width="33" height="33" rx="7.5" fill="#3d5cf2" />
<g transform="rotate(15 151.5 798.5)"><rect x="141.3" y="788.3" width="20.4" height="20.4" fill="#fff"/><rect x="148.6" y="795.6" width="5.8" height="5.8" fill="#3d5cf2"/></g>
<rect x="179.25" y="782" width="33" height="33" rx="7.5" fill="url(#gM)" />
<rect x="184.25" y="791.3" width="23" height="14.700" rx="2" fill="#f4f4f4"/><path d="M184.75 792 L195.75 801 L206.75 792" fill="none" stroke="#c9c9cc" stroke-width="1"/><path d="M184.75 805.5 L192.25 798.5 M206.75 805.5 L199.25 798.5" stroke="#d6d6d9" stroke-width=".8"/>
<rect x="223.75" y="782" width="33" height="33" rx="7.5" fill="url(#gA)" />
<g stroke="#fff" stroke-width="2.300" stroke-linecap="round" fill="none"><path d="M241.55 789 L233.05 804.3"/><path d="M238.05 789 L248.45 807.5"/><path d="M229.75 802.3 H243.75 M248.05 802.3 H251.05"/><path d="M231.75 806.7 L231.05 808"/></g>
<rect x="268.75" y="782" width="33" height="33" rx="7.5" fill="url(#gG)" />
<circle cx="285.25" cy="798.5" r="13.600" fill="#38383a"/><circle cx="285.25" cy="798.5" r="12" fill="none" stroke="#8a8a8c" stroke-width="1.300"/><circle cx="285.25" cy="798.5" r="10.300" fill="#2a2a2c"/><circle cx="285.25" cy="798.5" r="8.600" fill="#7c7c7f"/>
<path d="M285.2 798.5 L285.25 788.90" stroke="#262628" stroke-width="2.300"/>
<path d="M285.2 798.5 L276.94 803.30" stroke="#262628" stroke-width="2.300"/>
<path d="M285.2 798.5 L293.56 803.30" stroke="#262628" stroke-width="2.300"/>
<circle cx="285.25" cy="798.5" r="2.400" fill="#262628"/>
<rect x="292.0" y="778.5" width="15" height="15" rx="7.500" fill="#e8463c"/><text x="299.5" y="789.4" font-size="9.600" text-anchor="middle" fill="#fff" font-family="Liberation Sans,sans-serif">1</text>
<g clip-path="url(#cMp)"><rect x="313" y="782" width="33" height="33" fill="#80d672"/><path d="M313 795 L321 799 V815 H313Z" fill="#ee93cf"/><path d="M331 815 V806 L342 812 V815Z" fill="#f7d148"/><path d="M334 782 A12.500 12.500 0 0 0 346 794.5 V782Z" fill="#8fdc80"/><path d="M335 782 A11.500 11.500 0 0 0 346 793.5" fill="none" stroke="#e6e6ea" stroke-width="3.400"/><path d="M337.5 782 A9 9 0 0 0 346 791" fill="none" stroke="#c3c3ca" stroke-width="1.200"/><path d="M313 790.5 L346 809.5" stroke="#fff" stroke-width="5.200"/><path d="M321 815 V802 " stroke="#fff" stroke-width="2.500" fill="none"/><rect x="319.3" y="782" width="12" height="33" fill="#fff"/><rect x="322" y="782" width="7" height="17" fill="#3d88f5"/><rect x="322.5" y="808" width="8" height="7" fill="#e9ecef"/></g>
<circle cx="325.5" cy="802.3" r="8.200" fill="#fbfbfd"/><circle cx="325.5" cy="802.3" r="6.900" fill="#2f7df6"/><path d="M325.5 797 L329.2 806.3 L325.5 804.2 L321.8 806.3Z" fill="#fff"/>
<rect x="357.5" y="782" width="33" height="33" rx="7.5" fill="url(#gFt)" />
<rect x="362.1" y="791.6" width="16.600" height="13.800" rx="3.800" fill="#f4f6f4"/><path d="M380.1 796.6 L384.8 793.2 V803.8 L380.1 800.4Z" fill="#eef2ee" stroke="#eef2ee" stroke-width="1" stroke-linejoin="round"/>
<rect x="380.9" y="778.5" width="15" height="15" rx="7.500" fill="#e8463c"/><text x="388.4" y="789.4" font-size="9.600" text-anchor="middle" fill="#fff" font-family="Liberation Sans,sans-serif">9</text>
<rect x="402.5" y="782" width="33" height="33" rx="7.5" fill="url(#gFt)" />
<ellipse cx="418.8" cy="797.3" rx="10.600" ry="8.800" fill="#f1f8f0" opacity=".95"/><path d="M412.5 803.5 Q412.3 807 410.3 808.3 Q414.5 808.5 416.8 805.8Z" fill="#f1f8f0" opacity=".95"/>
<rect x="422.4" y="778.5" width="19" height="15" rx="7.500" fill="#e8463c"/><text x="431.9" y="789.4" font-size="8.400" letter-spacing="-.3" text-anchor="middle" fill="#fff" font-family="Liberation Sans,sans-serif">210</text>
<g clip-path="url(#cN)"><rect x="447" y="782" width="33" height="33" fill="url(#gN)"/><rect x="447" y="782" width="33" height="8" fill="#fbd33c"/><path d="M447 798H480M447 805.5H480" stroke="#d9d6cf" stroke-width=".7"/></g>
<rect x="491.5" y="782" width="33" height="33" rx="7.5" fill="#fdfdfd" />
<ellipse cx="508.0" cy="791.2" rx="3.900" ry="6.500" fill="#f59a1e" opacity=".88" transform="rotate(-90 508.0 798.5)"/>
<ellipse cx="508.0" cy="791.2" rx="3.900" ry="6.500" fill="#f2cf2e" opacity=".88" transform="rotate(-45 508.0 798.5)"/>
<ellipse cx="508.0" cy="791.2" rx="3.900" ry="6.500" fill="#8fcb3e" opacity=".88" transform="rotate(0 508.0 798.5)"/>
<ellipse cx="508.0" cy="791.2" rx="3.900" ry="6.500" fill="#3fb9a0" opacity=".88" transform="rotate(45 508.0 798.5)"/>
<ellipse cx="508.0" cy="791.2" rx="3.900" ry="6.500" fill="#3f93ea" opacity=".88" transform="rotate(90 508.0 798.5)"/>
<ellipse cx="508.0" cy="791.2" rx="3.900" ry="6.500" fill="#7f62d8" opacity=".88" transform="rotate(135 508.0 798.5)"/>
<ellipse cx="508.0" cy="791.2" rx="3.900" ry="6.500" fill="#cf52ab" opacity=".88" transform="rotate(180 508.0 798.5)"/>
<ellipse cx="508.0" cy="791.2" rx="3.900" ry="6.500" fill="#ea4f48" opacity=".88" transform="rotate(225 508.0 798.5)"/>
<rect x="536" y="782" width="33" height="33" rx="7.5" fill="#fefefe" />
<circle cx="562.80" cy="798.50" r="3.300" fill="#e0343a"/>
<circle cx="558.10" cy="798.50" r=".9" fill="#e0343a"/>
<circle cx="559.78" cy="805.78" r="3.300" fill="#e0343a"/>
<circle cx="556.46" cy="802.46" r=".9" fill="#e0343a"/>
<circle cx="552.50" cy="808.80" r="3.300" fill="#e0343a"/>
<circle cx="552.50" cy="804.10" r=".9" fill="#e0343a"/>
<circle cx="545.22" cy="805.78" r="3.300" fill="#e0343a"/>
<circle cx="548.54" cy="802.46" r=".9" fill="#e0343a"/>
<circle cx="542.20" cy="798.50" r="3.300" fill="#e0343a"/>
<circle cx="546.90" cy="798.50" r=".9" fill="#e0343a"/>
<circle cx="545.22" cy="791.22" r="3.300" fill="#e0343a"/>
<circle cx="548.54" cy="794.54" r=".9" fill="#e0343a"/>
<circle cx="552.50" cy="788.20" r="3.300" fill="#e0343a"/>
<circle cx="552.50" cy="792.90" r=".9" fill="#e0343a"/>
<circle cx="559.78" cy="791.22" r="3.300" fill="#e0343a"/>
<circle cx="556.46" cy="794.54" r=".9" fill="#e0343a"/>
<circle cx="552.5" cy="798.5" r="12.800" fill="none" stroke="#fefefe" stroke-width="3.200"/>
<rect x="580.75" y="782" width="33" height="33" rx="7.5" fill="url(#gSf)" />
<circle cx="597.25" cy="798.5" r="13.700" fill="url(#gSf2)"/>
<path d="M606.55 789.2 L599.05 800.3 L595.45 796.7Z" fill="#ef4a3e"/><path d="M587.95 807.8 L599.05 800.3 L595.45 796.7Z" fill="#f4f4f4"/>
<rect x="625.75" y="782" width="33" height="33" rx="7.5" fill="#fcfcfc" />
<circle cx="637.25" cy="793.5" r="5.300" fill="#f4c63a"/><path d="M635.25 797 H639.25 V807.5 L637.25 809.8 L635.25 807.5Z" fill="#f4c63a"/>
<circle cx="640.55" cy="793.5" r="5.300" fill="#5bc86a"/><path d="M638.55 797 H642.55 V807.5 L640.55 809.8 L638.55 807.5Z" fill="#5bc86a"/>
<circle cx="645.25" cy="793.5" r="5.300" fill="#2f8df5"/><path d="M643.25 797 H647.25 V807.5 L645.25 809.8 L643.25 807.5Z" fill="#2f8df5"/>
<circle cx="645.25" cy="791.8" r="1.500" fill="#fcfcfc"/><path d="M647.25 801 h2 v1.800 h-2z M647.25 804.3 h1.600 v1.600 h-1.600z" fill="#2f8df5"/>
<rect x="670" y="782" width="33" height="33" rx="7.5" fill="#d9d1cf" />
<rect x="675.3" y="787.5" width="6.300" height="6.300" rx="1.500" fill="#6fd24d"/>
<rect x="683.3" y="787.5" width="6.300" height="6.300" rx="1.500" fill="#f3c12f"/>
<rect x="691.3" y="787.5" width="6.300" height="6.300" rx="1.500" fill="#f08a28"/>
<rect x="675.3" y="795.5" width="6.300" height="6.300" rx="1.500" fill="#d83a2e"/>
<rect x="683.3" y="795.5" width="6.300" height="6.300" rx="1.500" fill="#a3a3a6"/>
<rect x="691.3" y="795.5" width="6.300" height="6.300" rx="1.500" fill="#ee4f73"/>
<rect x="675.3" y="803.5" width="6.300" height="6.300" rx="1.500" fill="#a04fe0"/>
<rect x="683.3" y="803.5" width="6.300" height="6.300" rx="1.500" fill="#2f86f3"/>
<rect x="691.3" y="803.5" width="6.300" height="6.300" rx="1.500" fill="#3fd0b6"/>
<rect x="718.800" y="781" width="1" height="39" fill="#b9a7a3" opacity=".75"/>
<rect x="735" y="782" width="33" height="33" rx="7.5" fill="#fbfbfb" />
<path d="M751.5 798.5 L739.38 791.50 A14 14 0 0 1 763.62 791.50Z" fill="#e8453c"/>
<path d="M751.5 798.5 L763.62 791.50 A14 14 0 0 1 751.50 812.50Z" fill="#fbc02d"/>
<path d="M751.5 798.5 L751.50 812.50 A14 14 0 0 1 739.38 791.50Z" fill="#34a853"/>
<path d="M763.62 791.50 L751.50 798.50 L754.75 804.13Z" fill="#e8453c"/>
<path d="M751.50 812.50 L751.50 798.50 L745.00 798.50Z" fill="#fbc02d"/>
<path d="M739.38 791.50 L751.50 798.50 L754.75 792.87Z" fill="#34a853"/>
<circle cx="751.5" cy="798.5" r="6.500" fill="#fff"/><circle cx="751.5" cy="798.5" r="5.200" fill="#4a8af4"/>
<rect x="777.5" y="780" width="37.500" height="36.500" rx="8" fill="#121212"/>
<polygon points="808.63,805.40 796.25,812.55 783.87,805.40 783.87,791.10 796.25,783.95 808.63,791.10" fill="#a81f22" stroke="#a81f22" stroke-width="2" stroke-linejoin="round"/><polygon points="805.78,803.75 796.25,809.25 786.72,803.75 786.72,792.75 796.25,787.25 805.78,792.75" fill="#de2d2d" stroke="#de2d2d" stroke-width="1.500" stroke-linejoin="round"/><path d="M792.95 792.95 L801.95 798.25 L792.95 803.55Z" fill="#fff"/>
<rect x="824.25" y="782" width="33" height="33" rx="7.5" fill="url(#gB)" />
<path d="M840.75 793 C837.25 790.3 833.25 790.3 829.75 791.5 V805.5 C833.25 804.5 837.25 804.7 840.75 807 C844.25 804.7 848.25 804.5 851.75 805.5 V791.5 C848.25 790.3 844.25 790.3 840.75 793Z" fill="#fff"/><path d="M840.75 793 V807" stroke="#f08a2c" stroke-width=".8"/>
<rect x="868.75" y="782" width="33" height="33" rx="7.5" fill="#121212" />
<circle cx="885.25" cy="798.5" r="12.700" fill="#4ed267"/><g fill="none" stroke="#121212" stroke-linecap="round"><path d="M877.75 794.7 Q885.25 791.5 893.25 795.7" stroke-width="2.500"/><path d="M878.75 799.2 Q885.25 796.5 891.95 800.0" stroke-width="2.100"/><path d="M879.75 803.3 Q885.25 801.0 890.55 803.8" stroke-width="1.700"/></g>
<rect x="914" y="782" width="33" height="33" rx="7.5" fill="url(#gC2)" />
<text x="930.5" y="802.3" font-size="11.200" font-style="italic" font-weight="bold" text-anchor="middle" fill="#fff" font-family="Liberation Serif,serif" letter-spacing="-.3">Canva</text>
<rect x="958.5" y="782" width="33" height="33" rx="7.5" fill="#d23b40" />
<circle cx="975.0" cy="798.5" r="12.800" fill="#1c1c1e"/><circle cx="975.0" cy="798.5" r="9.800" fill="#2a2a2c" stroke="#f2f2f2" stroke-width="1.700"/><path d="M971.5 792.8 L981.3 798.5 L971.5 804.2Z" fill="#d9d9dc"/>
<rect x="1003" y="782" width="33" height="33" rx="7.500" fill="#f6f5f3"/><g clip-path="url(#cPv)"><rect x="1005" y="784" width="29" height="29" fill="#9db8ea"/><rect x="1005" y="792" width="29" height="8" fill="#b5c8ee" opacity=".6"/><rect x="1005" y="799.5" width="29" height="5" fill="#2f4f90"/><path d="M1005 804.5 Q1012 802 1018 804.8 T1034 804 V813 H1005Z" fill="#e6ecf2"/><path d="M1005 803 q3 -1.500 6 .5 q-3 2.500 -6 1.500z" fill="#3a3a3a"/><path d="M1007 810 h9 v2 h-9z" fill="#b59a6a" opacity=".7"/></g>
<path d="M1018.8 803.5 H1035 L1036.6 814.5 Q1027 818 1017.3 814.5Z" fill="#e3e7ec" stroke="#7e848c" stroke-width=".7" opacity=".96"/><rect x="1019.3" y="798" width="14.800" height="6" rx="1.800" fill="#1b1b1d"/><path d="M1022.5 810.5 q2 -2.500 4 0 t4 -.5 t3 -1" fill="none" stroke="#5a6a88" stroke-width="1"/>
<rect x="1051.800" y="781" width="1" height="39" fill="#b9a7a3" opacity=".75"/>
<rect x="1064.800" y="787.700" width="39.200" height="22.500" fill="#fdfdfd"/><rect x="1064.800" y="787.700" width="4.200" height="22.500" fill="#3c3c3e"/><rect x="1083" y="792.500" width="6.500" height="2" fill="#d63a6a"/><path d="M1072.500 796.500h23M1072.500 798.500h25M1072.500 800.500h24M1072.500 802.500h25M1072.500 804.500h22M1072.500 806.500h16" stroke="#9a9a9a" stroke-width=".7"/><path d="M1066 791h2M1066 794h2M1066 797h2M1066 800h2" stroke="#ddd" stroke-width="1.200"/>
<rect x="1090.500" y="805" width="13" height="13" rx="3" fill="#f3f3f3"/><rect x="1092" y="806.500" width="10" height="6" fill="#86b3ea"/><rect x="1092" y="811" width="10" height="2.500" fill="#3f6fb5"/><rect x="1095.500" y="812" width="6.500" height="5.500" rx="1" fill="#dfe3e8" stroke="#555" stroke-width=".5"/>
<rect x="1109.300" y="784" width="38.700" height="29" fill="#141414"/><rect x="1113.500" y="786" width="20" height="13.500" fill="#3f6a3c"/><rect x="1113.500" y="794" width="20" height="5.500" fill="#2a4a2a"/><rect x="1114.500" y="787.500" width="7.500" height="7.500" fill="#c9a85a"/><rect x="1125.500" y="788.500" width="9" height="2.500" fill="#6a8a4a"/><rect x="1125.500" y="792.500" width="7" height="1.500" fill="#4a5a3a"/><rect x="1135" y="787" width="12" height="18" fill="#2a1f18"/><rect x="1136" y="790" width="10" height="11" fill="#8a5a2a"/><rect x="1138" y="792" width="5" height="6" fill="#c9983a"/><rect x="1115" y="799" width="5" height="4" fill="#3a8a5a"/><rect x="1121.500" y="799" width="5" height="4" fill="#8a6a3a"/><rect x="1115" y="805" width="18" height="1.500" fill="#3a3a3a"/><path d="M1111.500 787v22" stroke="#444" stroke-width="1.500" stroke-dasharray="1.500 1.500"/>
<rect x="1135" y="806" width="13.500" height="13.500" rx="3.300" fill="#121212"/><circle cx="1141.750" cy="812.750" r="5.300" fill="#4ed267"/><path d="M1138.700 811.200q3-1.300 6.300.4M1139.200 813.100q2.600-1 5.300.4M1139.700 814.900q2.100-.8 4.200.3" stroke="#121212" stroke-width=".9" fill="none" stroke-linecap="round"/>
<rect x="1153.900" y="787" width="38.600" height="22" fill="#585454"/><rect x="1153.900" y="787" width="38.600" height="2" fill="#3e3b3b"/><rect x="1173" y="798.500" width="14" height="5" fill="#141414"/><rect x="1156" y="791" width="5" height="2.500" fill="#8a9aa8"/><rect x="1156" y="797.500" width="2" height="1.500" fill="#4ad05a"/><path d="M1156 801h10M1156 805h8M1166 805h10" stroke="#777" stroke-width=".6"/>
<rect x="1179.300" y="804.500" width="13.300" height="13.300" rx="3.300" fill="#f4f4f6"/><circle cx="1185.950" cy="811.150" r="5.400" fill="#2f86f3"/><path d="M1189.500 807.600L1186.700 811.900L1185.200 810.400Z" fill="#ef4a3e"/><path d="M1182.400 814.700L1186.700 811.900L1185.200 810.400Z" fill="#fff"/>
<path d="M1203 783.500 Q1217.200 779.500 1231.600 783.500 L1228.600 812.500 Q1228.300 815.500 1225 816 Q1217.300 817.300 1209.600 816 Q1206.300 815.500 1206 812.500Z" fill="url(#gT2)"/><ellipse cx="1217.300" cy="783.800" rx="14.300" ry="3" fill="#55575a"/>
<path d="M1204.500 784 L1206.500 779.800 L1210.500 781 L1212.500 777.800 L1216.500 780 L1220 777.600 L1223 780.300 L1227 778.600 L1230 783.800 Q1217.300 788 1204.500 784Z" fill="#eeeeee"/><path d="M1209.500 783 l2.500-2 l2 2.500z" fill="#7a3a2a"/><path d="M1214.500 782.500 l2-2 l2 1.500 l-1.500 2z" fill="#5aa0d8"/><path d="M1219.500 783.300 l2.500-2.300 l2.500 2.300z" fill="#6a4a3a"/><path d="M1217.500 783.500 l1-2 l1.500 2z" fill="#6ab04a"/>
<circle cx="61.5" cy="824" r="1.700" fill="#f6f1ef"/>
<circle cx="106.5" cy="824" r="1.700" fill="#f6f1ef"/>
<circle cx="196" cy="824" r="1.700" fill="#f6f1ef"/>
<circle cx="329.25" cy="824" r="1.700" fill="#f6f1ef"/>
<circle cx="418.75" cy="824" r="1.700" fill="#f6f1ef"/>
<circle cx="463" cy="824" r="1.700" fill="#f6f1ef"/>
<circle cx="597.5" cy="824" r="1.700" fill="#f6f1ef"/>
<circle cx="641.25" cy="824" r="1.700" fill="#f6f1ef"/>
<circle cx="751.25" cy="824" r="1.700" fill="#f6f1ef"/>
<circle cx="795.75" cy="824" r="1.700" fill="#f6f1ef"/>
<circle cx="840.25" cy="824" r="1.700" fill="#f6f1ef"/>
<circle cx="884.75" cy="824" r="1.700" fill="#f6f1ef"/>
<circle cx="929.7" cy="824" r="1.700" fill="#f6f1ef"/>
<circle cx="974.2" cy="824" r="1.700" fill="#f6f1ef"/>
<circle cx="1018.8" cy="824" r="1.700" fill="#f6f1ef"/>
</svg><!--/DOCKSVG-->
</body>
</html>
